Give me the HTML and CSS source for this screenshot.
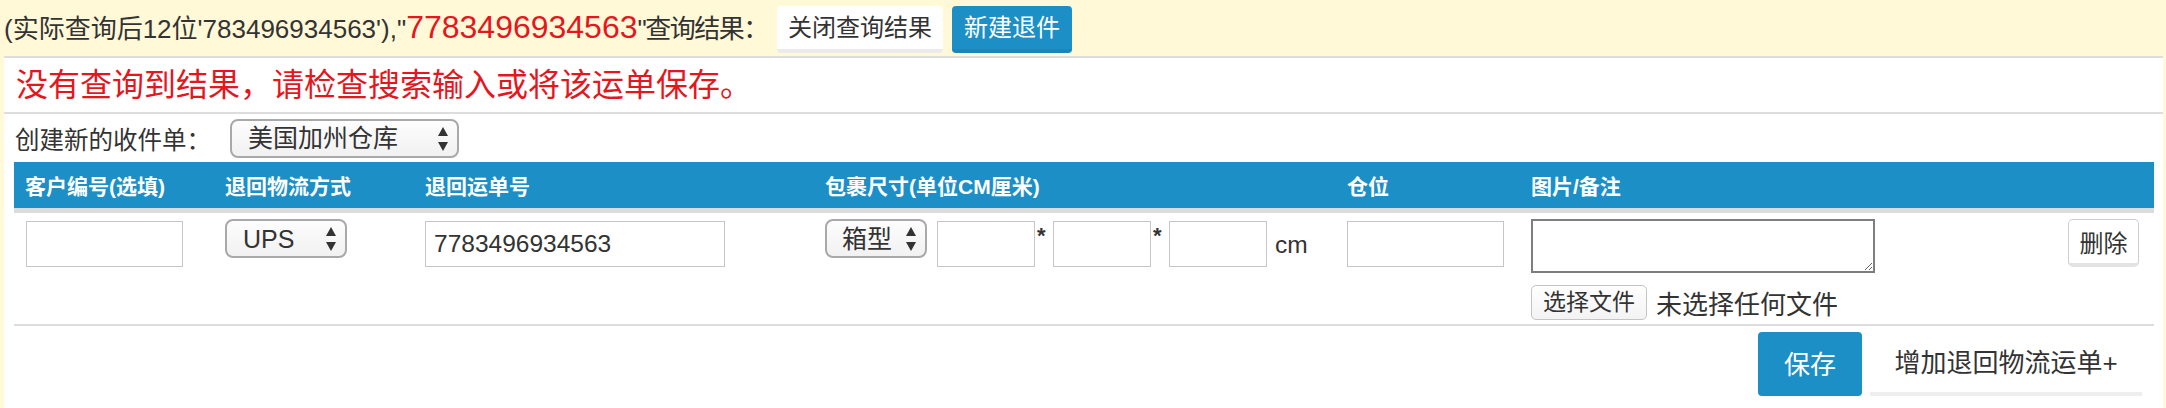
FILE: index.html
```html
<!DOCTYPE html>
<html lang="zh-CN">
<head>
<meta charset="utf-8">
<title>退件查询</title>
<link rel="stylesheet" href="styles.css">
</head>
<body>
<div class="topbar">
  <span class="query">(实际查询后12位'783496934563'),"<span class="num">7783496934563</span><span class="tail">"查询结果：</span></span>
  <button class="btn btn-light">关闭查询结果</button>
  <button class="btn btn-blue">新建退件</button>
</div>
<div class="panel">
  <div class="msg">没有查询到结果，请检查搜索输入或将该运单保存。</div>
  <div class="create">
    <span class="create-label">创建新的收件单：</span>
    <div class="sel sel-wh">
      <select><option>美国加州仓库</option></select>
      <svg class="arrows" viewBox="0 0 12 26" width="12" height="26"><path d="M6 1 L11 10 L1 10 Z M6 25 L11 16 L1 16 Z" fill="#333"/></svg>
    </div>
  </div>
  <div class="grid head">
    <div class="cell">客户编号(选填)</div>
    <div class="cell">退回物流方式</div>
    <div class="cell">退回运单号</div>
    <div class="cell">包裹尺寸(单位CM厘米)</div>
    <div class="cell">仓位</div>
    <div class="cell">图片/备注</div>
  </div>
  <div class="grid row">
    <div class="cell"><input class="inp inp-cust" type="text"></div>
    <div class="cell">
      <div class="sel sel-ups">
        <select><option>UPS</option></select>
        <svg class="arrows" viewBox="0 0 12 26" width="12" height="26"><path d="M6 1 L11 10 L1 10 Z M6 25 L11 16 L1 16 Z" fill="#333"/></svg>
      </div>
    </div>
    <div class="cell"><input class="inp inp-way" type="text" value="7783496934563"></div>
    <div class="cell dims">
      <div class="sel sel-box">
        <select><option>箱型</option></select>
        <svg class="arrows" viewBox="0 0 12 26" width="12" height="26"><path d="M6 1 L11 10 L1 10 Z M6 25 L11 16 L1 16 Z" fill="#333"/></svg>
      </div>
      <input class="inp inp-dim" type="text"><span class="star">*</span><input class="inp inp-dim" type="text"><span class="star">*</span><input class="inp inp-dim" type="text"><span class="unit">cm</span>
    </div>
    <div class="cell"><input class="inp inp-loc" type="text"></div>
    <div class="cell last">
      <div class="note">
        <textarea class="ta"></textarea>
        <div class="file"><span class="file-btn">选择文件</span><span class="file-txt">未选择任何文件</span></div>
      </div>
      <button class="btn-del">删除</button>
    </div>
  </div>
  <div class="actions">
    <button class="btn btn-blue btn-save">保存</button>
    <button class="btn btn-light btn-add">增加退回物流运单+</button>
  </div>
</div>
</body>
</html>
```
FILE: styles.css
```css
* { box-sizing: border-box; }
html, body { margin: 0; padding: 0; }
body {
  background: #fff9d8;
  color: #333;
  font-family: "Liberation Sans", "Noto Sans CJK SC", sans-serif;
  width: 2166px;
  height: 408px;
  overflow: hidden;
}
button, input, select, textarea { font-family: inherit; color: #333; }

.topbar {
  height: 56px;
  display: flex;
  align-items: center;
  padding-left: 4px;
}
.query { font-size: 26px; line-height: 32px; width: 773px; flex: none; white-space: nowrap; }
.query .num { color: #e5161e; font-size: 32px; }
.query .tail { letter-spacing: -1.5px; }

.btn {
  border: none;
  border-radius: 4px;
  font-size: 24px;
  line-height: 30px;
  padding: 7px 0 6px;
  border-bottom: 4px solid rgba(0,0,0,0.08);
  white-space: nowrap;
  text-align: center;
}
.btn-light { background: #fff; color: #333; }
.btn-blue { background: #1c8fc6; color: #fff; border-bottom-color: #1a86ba; }
.topbar .btn { height: 47px; margin-top: 2px; }
.topbar .btn-light { width: 166px; margin-right: 9px; }
.topbar .btn-blue { width: 120px; }

.panel {
  background: #fff;
  margin: 0 3px 0 4px;
  border-top: 2px solid #ddd;
  height: 352px;
}
.msg {
  height: 56px;
  border-bottom: 2px solid #ddd;
  color: #e5161e;
  font-size: 32px;
  line-height: 54px;
  padding-left: 12px;
  white-space: nowrap;
}
.create {
  height: 48px;
  display: flex;
  align-items: center;
  padding-left: 11px;
  font-size: 24.5px;
}
.create-label { width: 215px; white-space: nowrap; }

.sel { position: relative; }
.sel select {
  -webkit-appearance: none;
  appearance: none;
  height: 39px;
  border: 2px solid #a9a9a9;
  border-radius: 8px;
  background: linear-gradient(#fdfdfd, #f1f1f1);
  font-size: 25px;
  padding: 0 0 0 16px;
  width: 100%;
  display: block;
}
.sel .arrows { position: absolute; top: 7px; right: 10px; pointer-events: none; }
.sel-wh { width: 229px; }
.sel-ups { width: 122px; }
.sel-box { width: 102px; }
.sel-box select { padding-left: 15px; }

.grid {
  display: grid;
  grid-template-columns: 200px 200px 400px 522px 184px 1fr;
  margin: 0 9px 0 10px;
}
.head {
  background: #1c8fc6;
  height: 51px;
  border-bottom: 5px solid #dcdcdc;
  color: #fff;
  font-weight: bold;
  font-size: 21px;
  align-items: center;
}
.head .cell { padding-left: 11px; white-space: nowrap; }

.row {
  height: 113px;
  border-bottom: 2px solid #ddd;
  padding-top: 6px;
  align-items: start;
}
.row .cell { padding-left: 11px; }
.inp {
  height: 46px;
  border: 1px solid #c6c6c6;
  background: #fff;
  font-size: 24.5px;
  padding: 0 8px;
  display: block;
  margin-top: 2px;
}
.inp-cust { width: 157px; margin-left: 1px; }
.inp-way { width: 300px; }
.inp-loc { width: 157px; }
.dims { display: flex; align-items: flex-start; }
.inp-dim { width: 98px; }
.sel-box { margin-right: 10px; }
.star { font-size: 22px; font-weight: bold; width: 18px; padding-left: 2px; line-height: 34px; }
.unit { font-size: 24.5px; line-height: 52px; margin-left: 8px; }
.last { display: flex; justify-content: space-between; padding-right: 15px; }
.note { display: flex; flex-direction: column; }
.ta {
  width: 344px;
  height: 54px;
  border: 2px solid #7e7e7e;
  resize: both;
  display: block;
}
.file { display: flex; align-items: center; margin-top: 11px; }
.file-btn {
  height: 35px;
  padding: 0 11px;
  border: 1px solid #c4c4c4;
  border-radius: 5px;
  background: linear-gradient(#fff, #f3f3f3);
  font-size: 23px;
  line-height: 33px;
}
.file-txt { font-size: 26px; margin-left: 9px; }
.btn-del {
  width: 71px;
  height: 48px;
  background: #fff;
  border: 1px solid #cfcfcf;
  border-bottom: 4px solid #e3e3e3;
  border-radius: 5px;
  font-size: 24px;
  padding: 0;
}

.actions {
  display: flex;
  justify-content: flex-end;
  margin: 0 21px 0 10px;
  padding-top: 6px;
  gap: 8px;
}
.btn-save { width: 104px; height: 64px; font-size: 26px; border-bottom: none; }
.btn-add {
  width: 272px;
  height: 64px;
  font-size: 26px;
  border-radius: 0;
  border-bottom: 4px solid #eeeeee;
}
```
